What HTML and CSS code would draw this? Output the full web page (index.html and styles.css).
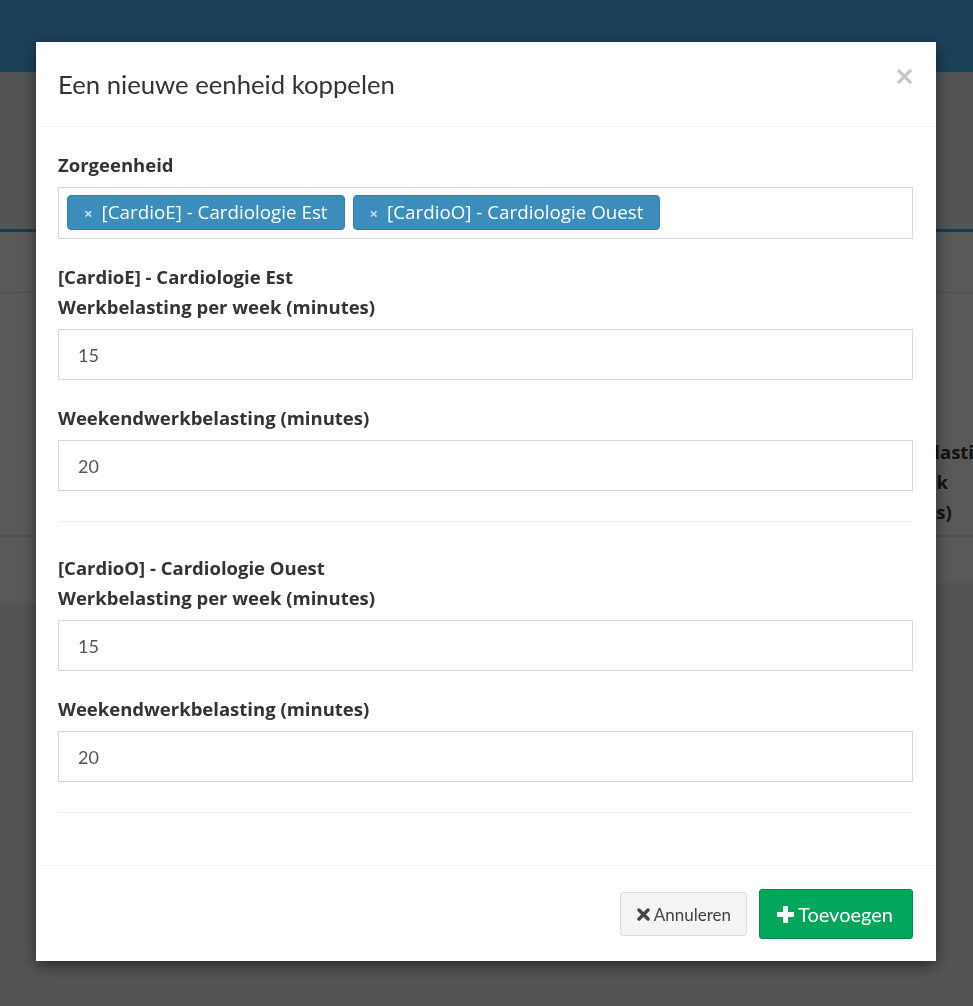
FILE: index.html
```html
<!doctype html>
<html lang="nl">
<head>
  <meta charset="UTF-8">
  <meta name="viewport" content="width=device-width, initial-scale=1.0">
  <title>Een nieuwe eenheid koppelen</title>
  <link rel="stylesheet" href="styles.css">
</head>
<body>
  <div class="page">
    <header class="topbar"></header>
    <section class="content-header"></section>
    <div class="box">
      <div class="box-header"></div>
      <div class="table">
        <div class="thead-row">
          <div class="th-spacer"></div>
          <div class="th">Werkbelasting per week (minutes)</div>
        </div>
        <div class="tbody-row"></div>
      </div>
    </div>
    <div class="box-tail"></div>
  </div>

  <div class="backdrop"></div>

  <div class="modal-wrap">
    <div class="modal">
      <div class="modal-header">
        <h4 class="modal-title">Een nieuwe eenheid koppelen</h4>
        <button class="close" type="button" aria-label="Close">
          <svg width="15" height="15" viewBox="0 0 15 15"><path d="M2 2 L13 13 M13 2 L2 13" stroke="currentColor" stroke-width="3.2" stroke-linecap="square"/></svg>
        </button>
      </div>

      <div class="modal-body">
        <div class="form-group">
          <label>Zorgeenheid</label>
          <div class="select2">
            <span class="tag"><span class="tag-remove">×</span>[CardioE] - Cardiologie Est</span>
            <span class="tag"><span class="tag-remove">×</span>[CardioO] - Cardiologie Ouest</span>
          </div>
        </div>

        <div class="form-group">
          <div class="unit-name">[CardioE] - Cardiologie Est</div>
          <label>Werkbelasting per week (minutes)</label>
          <input class="form-control" type="text" value="15">
        </div>
        <div class="form-group">
          <label>Weekendwerkbelasting (minutes)</label>
          <input class="form-control" type="text" value="20">
        </div>
        <hr>

        <div class="form-group">
          <div class="unit-name">[CardioO] - Cardiologie Ouest</div>
          <label>Werkbelasting per week (minutes)</label>
          <input class="form-control" type="text" value="15">
        </div>
        <div class="form-group">
          <label>Weekendwerkbelasting (minutes)</label>
          <input class="form-control" type="text" value="20">
        </div>
        <hr>
      </div>

      <div class="modal-footer">
        <button class="btn btn-default" type="button">
          <svg width="13" height="13" viewBox="0 0 13 13"><path d="M2 2 L11 11 M11 2 L2 11" stroke="currentColor" stroke-width="3.4" stroke-linecap="round"/></svg>
          Annuleren
        </button>
        <button class="btn btn-success" type="button">
          <svg width="17" height="17" viewBox="0 0 17 17"><path d="M6.5 0.5 h4 v6 h6 v4 h-6 v6 h-4 v-6 h-6 v-4 h6 z" fill="currentColor" stroke="currentColor" stroke-width="1" stroke-linejoin="round"/></svg>
          Toevoegen
        </button>
      </div>
    </div>
  </div>
</body>
</html>
```

FILE: styles.css
```css
* {
  box-sizing: border-box;
}

body {
  margin: 0;
  font-family: Lato, 'Open Sans', sans-serif;
  color: #333;
  background-color: #ecf0f5;
  overflow: hidden;
  height: 1006px;
}

/* page behind the modal */
.topbar {
  height: 72px;
  background-color: #4eb8ff;
}

.content-header {
  height: 157px;
}

.box {
  background-color: #fff;
  border-top: 3px solid #4aa8e6;
  overflow: hidden;
}

.box-header {
  height: 61px;
  border-bottom: 1px solid #e2e2e2;
}

.thead-row {
  display: flex;
  align-items: flex-end;
  height: 244px;
  border-bottom: 2px solid #e8e8e8;
}

.th-spacer {
  flex: 0 0 855px;
}

.th {
  flex: 0 0 156px;
  padding: 8px;
  font-family: 'Open Sans', sans-serif;
  font-size: 18.5px;
  font-weight: bold;
  line-height: 30px;
}

.tbody-row {
  height: 46px;
}

.box-tail {
  width: 36px;
  height: 20px;
  background-color: #fff;
}

.backdrop {
  position: fixed;
  inset: 0;
  background-color: rgba(0, 0, 0, 0.65);
}

/* modal */
.modal-wrap {
  position: fixed;
  inset: 0 1px 0 0;
}

.modal {
  width: 900px;
  margin: 42px auto 0;
  background-color: #fff;
  box-shadow: 0 5px 15px rgba(0, 0, 0, 0.5);
}

.modal-header {
  display: flex;
  justify-content: space-between;
  align-items: flex-start;
  padding: 22px 24px 22px 22px;
  border-bottom: 1px solid #f4f4f4;
}

.modal-title {
  margin: 0;
  font-size: 25.7px;
  font-weight: normal;
  line-height: 40px;
  color: #333;
}

.close {
  margin-top: 5px;
  padding: 0;
  border: 0;
  background: none;
  color: #c6c6c6;
  cursor: pointer;
  line-height: 0;
}

.modal-body {
  padding: 23px 23px 21px 22px;
}

.form-group {
  margin-bottom: 23px;
}

label,
.unit-name {
  display: block;
  font-family: 'Open Sans', sans-serif;
  font-size: 18.5px;
  font-weight: bold;
  line-height: 30px;
  color: #333;
}

label {
  margin-bottom: 7px;
}

.select2 {
  display: flex;
  gap: 8px;
  height: 52px;
  padding: 7px 7px 7px 8px;
  border: 1px solid #d2d6de;
}

.tag {
  height: 35px;
  padding: 0 16px;
  border: 1px solid #367fa9;
  border-radius: 4px;
  background-color: #3c8dbc;
  color: #fff;
  font-family: 'Open Sans', sans-serif;
  font-size: 18.8px;
  line-height: 33px;
  white-space: nowrap;
}

.tag-remove {
  margin-right: 9px;
  font-size: 15px;
  font-weight: bold;
  color: rgba(255, 255, 255, 0.7);
}

.form-control {
  display: block;
  width: 100%;
  height: 51px;
  padding: 0 19px;
  border: 1px solid #d2d6de;
  border-radius: 0;
  font-family: inherit;
  font-size: 18px;
  color: #555;
}

hr {
  margin: 30px 0 31px;
  border: 0;
  border-top: 1px solid #eee;
}

.modal-footer {
  display: flex;
  justify-content: flex-end;
  align-items: center;
  gap: 12px;
  padding: 23px 23px 22px;
  border-top: 1px solid #f4f4f4;
}

.btn {
  display: flex;
  align-items: center;
  gap: 4px;
  border-radius: 3px;
  font-family: inherit;
  cursor: pointer;
}

.btn-default {
  height: 44px;
  padding: 0 15px 0 16px;
  border: 1px solid #ddd;
  background-color: #f4f4f4;
  color: #444;
  font-size: 17px;
}

.btn-success {
  height: 50px;
  padding: 0 19px 0 17px;
  border: 1px solid #008d4c;
  background-color: #00a65a;
  color: #fff;
  font-size: 20px;
}
```
